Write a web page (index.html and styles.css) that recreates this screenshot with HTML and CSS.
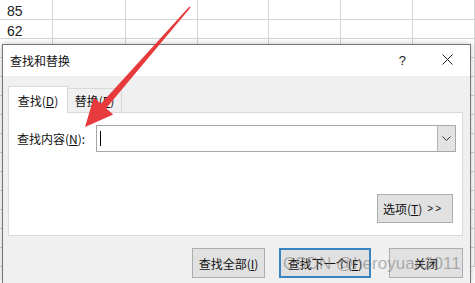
FILE: index.html
```html
<!DOCTYPE html>
<html lang="zh">
<head>
<meta charset="utf-8">
<title>查找和替换</title>
<link rel="stylesheet" href="styles.css">
</head>
<body>
<div class="sheet">
  <div class="cell num">85</div><div class="cell"></div><div class="cell"></div><div class="cell"></div><div class="cell"></div><div class="cell"></div><div class="cell"></div>
  <div class="cell num">62</div><div class="cell"></div><div class="cell"></div><div class="cell"></div><div class="cell"></div><div class="cell"></div><div class="cell"></div>
  <div class="cell"></div><div class="cell"></div><div class="cell"></div><div class="cell"></div><div class="cell"></div><div class="cell"></div><div class="cell"></div>
  <div class="cell"></div><div class="cell"></div><div class="cell"></div><div class="cell"></div><div class="cell"></div><div class="cell"></div><div class="cell"></div>
  <div class="cell"></div><div class="cell"></div><div class="cell"></div><div class="cell"></div><div class="cell"></div><div class="cell"></div><div class="cell"></div>
  <div class="cell"></div><div class="cell"></div><div class="cell"></div><div class="cell"></div><div class="cell"></div><div class="cell"></div><div class="cell"></div>
  <div class="cell"></div><div class="cell"></div><div class="cell"></div><div class="cell"></div><div class="cell"></div><div class="cell"></div><div class="cell"></div>
  <div class="cell"></div><div class="cell"></div><div class="cell"></div><div class="cell"></div><div class="cell"></div><div class="cell"></div><div class="cell"></div>
  <div class="cell"></div><div class="cell"></div><div class="cell"></div><div class="cell"></div><div class="cell"></div><div class="cell"></div><div class="cell"></div>
  <div class="cell"></div><div class="cell"></div><div class="cell"></div><div class="cell"></div><div class="cell"></div><div class="cell"></div><div class="cell"></div>
  <div class="cell"></div><div class="cell"></div><div class="cell"></div><div class="cell"></div><div class="cell"></div><div class="cell"></div><div class="cell"></div>
  <div class="cell"></div><div class="cell"></div><div class="cell"></div><div class="cell"></div><div class="cell"></div><div class="cell"></div><div class="cell"></div>
  <div class="cell"></div><div class="cell"></div><div class="cell"></div><div class="cell"></div><div class="cell"></div><div class="cell"></div><div class="cell"></div>
  <div class="cell"></div><div class="cell"></div><div class="cell"></div><div class="cell"></div><div class="cell"></div><div class="cell"></div><div class="cell"></div>
</div>

<div class="dialog">
  <div class="titlebar">
    <span class="title">查找和替换</span>
    <span class="help">?</span>
    <span class="close"><svg width="11" height="11" viewBox="0 0 11 11"><path d="M0.5 0.5 L10.5 10.5 M10.5 0.5 L0.5 10.5" stroke="#222" stroke-width="1" fill="none"/></svg></span>
  </div>
  <div class="body">
    <div class="tabs">
      <div class="tab active">查找(<u>D</u>)</div>
      <div class="tab">替换(<u>P</u>)</div>
    </div>
    <div class="panel">
      <div class="find-row">
        <span class="label">查找内容(<u>N</u>):</span>
        <div class="combo">
          <span class="caret"></span>
          <span class="drop"><svg width="9" height="6" viewBox="0 0 9 6"><path d="M0.5 0.5 L4.5 4.5 L8.5 0.5" stroke="#333" stroke-width="1" fill="none"/></svg></span>
        </div>
      </div>
      <div class="opt-row">
        <button class="btn opt">选项(<u>T</u>) <span class="gt">&gt;&gt;</span></button>
      </div>
    </div>
    <div class="actions">
      <button class="btn b1">查找全部(<u>I</u>)</button>
      <button class="btn b2 default">查找下一个(<u>F</u>)</button>
      <button class="btn b3">关闭</button>
    </div>
  </div>
</div>

<svg class="arrow" width="475" height="283" viewBox="0 0 475 283">
  <polygon points="189.4,6.4 190.6,7.6 106.1,108.3 113.2,114.6 85,127 93.8,97.4 100.9,103.7" fill="#e63a3c"/>
</svg>

<div class="watermark">CSDN @heroyuan2011</div>
</body>
</html>
```

FILE: styles.css
```css
html, body {
  margin: 0;
  padding: 0;
  background: #ffffff;
  overflow: hidden;
}
body {
  width: 475px;
  height: 283px;
  position: relative;
  font-family: "Noto Sans CJK SC", "Noto Sans", sans-serif;
  font-size: 12px;
  color: #000;
}

/* spreadsheet background */
.sheet {
  display: grid;
  grid-template-columns: 53px 73px 72px 71px 72px 72px 1fr;
  grid-template-rows: 20px;
  grid-auto-rows: 19px;
}
.cell {
  box-sizing: border-box;
  border-right: 1px solid #d4d4d4;
  border-bottom: 1px solid #d4d4d4;
}
.num {
  font-family: "Liberation Sans", Arial, sans-serif;
  font-size: 14px;
  line-height: 14px;
  padding: 4px 0 0 7px;
  color: #222;
}

/* dialog */
.dialog {
  position: absolute;
  left: 2px;
  top: 44px;
  width: 469px;
  height: 239px;
  box-sizing: border-box;
  border: 1px solid #767676;
  border-bottom: none;
  background: #f0f0f0;
  box-shadow: 0 0 6px rgba(0,0,0,0.25);
  display: flex;
  flex-direction: column;
  overflow: hidden;
}
.titlebar {
  height: 31px;
  background: #ffffff;
  display: flex;
  align-items: center;
  padding-left: 7px;
}
.title {
  flex: 1;
  font-size: 12px;
  color: #111;
  padding-bottom: 1px;
}
.help {
  font-family: "Liberation Sans", Arial, sans-serif;
  font-size: 13px;
  color: #222;
  margin-right: 36px;
}
.close {
  display: flex;
  margin-right: 17px;
  padding-bottom: 2px;
}

.body {
  padding: 10px 7px 0 5px;
  display: flex;
  flex-direction: column;
}
.tabs {
  display: flex;
  align-items: flex-end;
  height: 26px;
}
.tab {
  box-sizing: border-box;
  height: 24px;
  width: 54px;
  border: 1px solid #d9d9d9;
  border-bottom: none;
  border-left: none;
  background: #f0f0f0;
  display: flex;
  align-items: center;
  justify-content: center;
  color: #111;
}
.tab.active {
  width: 60px;
  height: 27px;
  margin-bottom: -1px;
  border-left: 1px solid #d9d9d9;
  background: #ffffff;
  position: relative;
  z-index: 1;
  padding-top: 1px;
}
.panel {
  box-sizing: border-box;
  width: 455px;
  height: 124px;
  background: #ffffff;
  border: 1px solid #d9d9d9;
  padding: 12px 6px 0 8px;
  display: flex;
  flex-direction: column;
}
.find-row {
  display: flex;
  align-items: center;
}
.label {
  flex: 0 0 79px;
  color: #111;
}
.combo {
  box-sizing: border-box;
  width: 360px;
  height: 27px;
  border: 1px solid #a8a8a8;
  display: flex;
  align-items: center;
  justify-content: space-between;
  background: #fff;
}
.caret {
  width: 1px;
  height: 15px;
  background: #000;
  margin-left: 3px;
}
.drop {
  box-sizing: border-box;
  width: 18px;
  height: 25px;
  background: #e3e3e3;
  border-left: 1px solid #b4b4b4;
  display: flex;
  align-items: center;
  justify-content: center;
}
.opt-row {
  display: flex;
  justify-content: flex-end;
  margin-top: 42px;
  padding-right: 3px;
}
.btn {
  box-sizing: border-box;
  font-family: "Noto Sans CJK SC", "Noto Sans", sans-serif;
  font-size: 12px;
  color: #111;
  background: #e1e1e1;
  border: 1px solid #adadad;
  padding: 0;
  margin: 0;
  height: 30px;
  display: flex;
  align-items: center;
  justify-content: center;
}
.opt {
  width: 76px;
  height: 29px;
  padding-right: 4px;
}
.gt {
  font-family: "Liberation Sans", Arial, sans-serif;
  font-size: 10px;
  letter-spacing: 2px;
  margin-left: 5px;
}
.actions {
  display: flex;
  justify-content: flex-end;
  margin-top: 12px;
}
.b1 { width: 73px; }
.b2 { width: 92px; margin-left: 14px; }
.b3 { width: 74px; margin-left: 18px; }
.default {
  border: 2px solid #3a84c2;
}

/* overlays */
.arrow {
  position: absolute;
  left: 0;
  top: 0;
}
.watermark {
  position: absolute;
  left: 283px;
  top: 255px;
  font-family: "Liberation Sans", Arial, sans-serif;
  font-size: 17px;
  line-height: 17px;
  color: rgba(110,110,110,0.5);
  white-space: nowrap;
}
```
